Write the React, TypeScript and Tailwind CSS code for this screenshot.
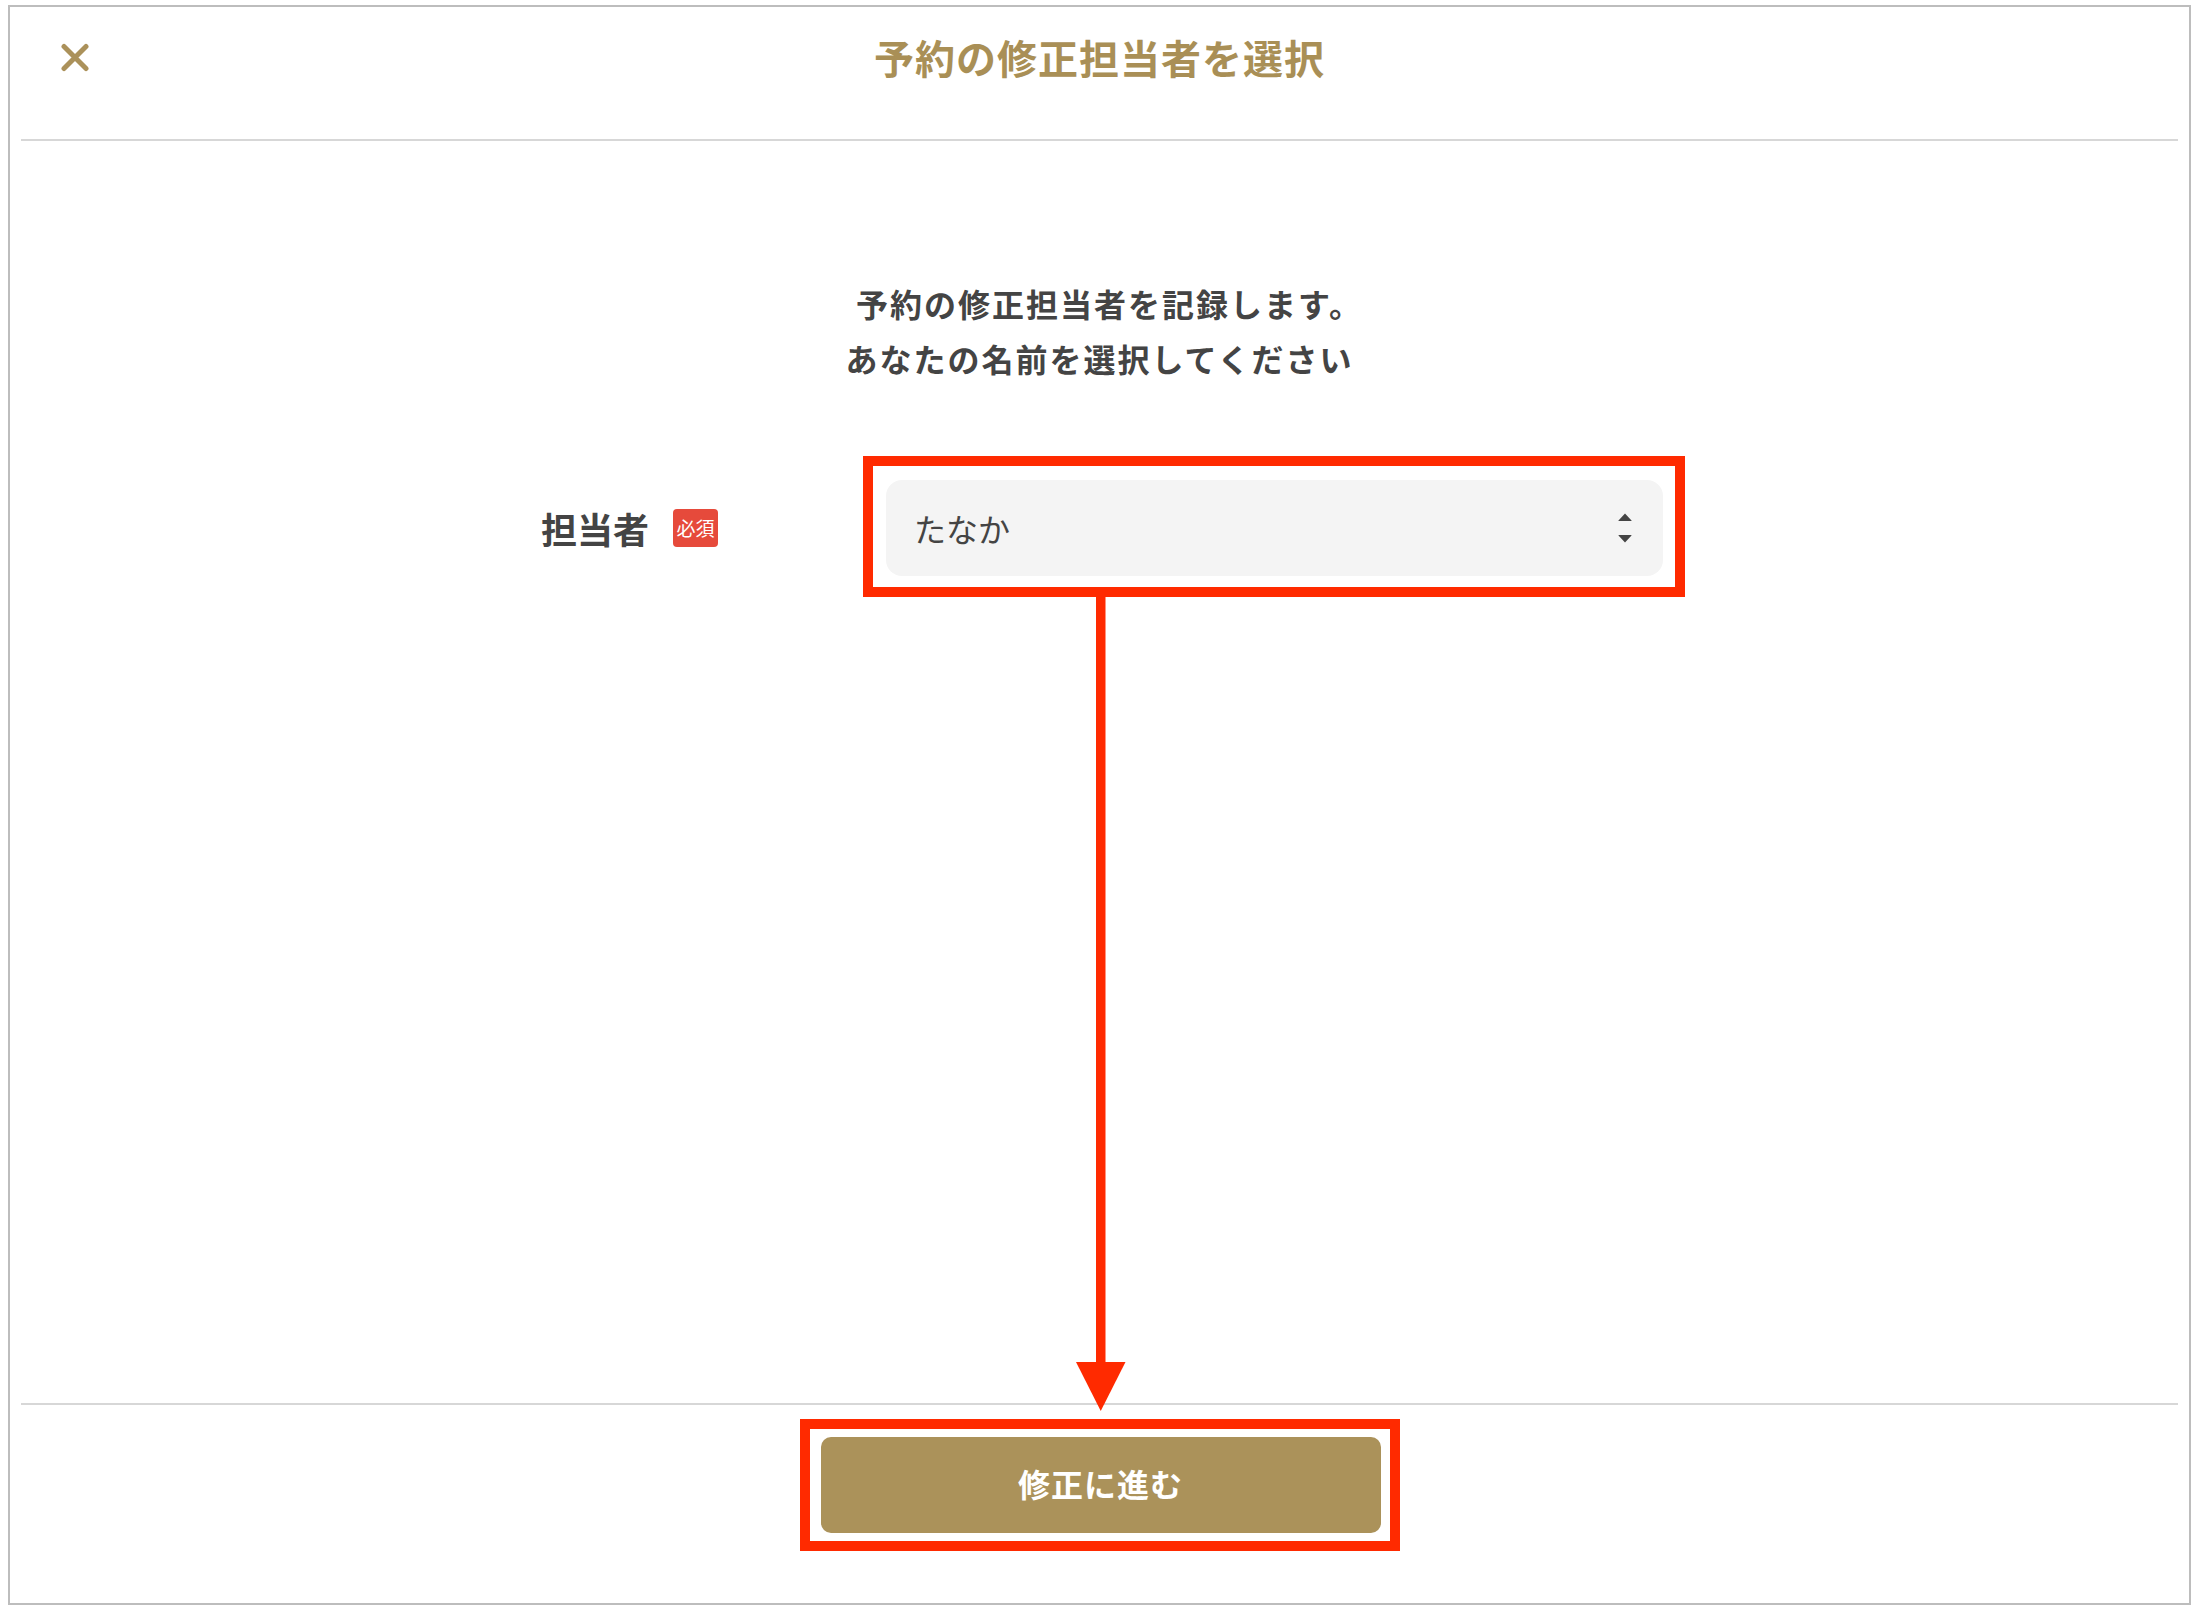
import React from 'react';

const gold = '#ab915a';

const CloseIcon: React.FC = () => (
  <svg width="28" height="29" viewBox="0 0 28 29" fill="none">
    <path d="M3 3.5 L25 25.5 M25 3.5 L3 25.5" stroke={gold} strokeWidth="5" strokeLinecap="round" />
  </svg>
);

const SelectArrows: React.FC = () => (
  <svg width="14" height="30" viewBox="0 0 14 30" fill="#444">
    <path d="M7 0.5 L13.5 7.5 Q14 8 13 8 L1 8 Q0 8 0.5 7.5 Z" />
    <path d="M7 29.5 L13.5 22.5 Q14 22 13 22 L1 22 Q0 22 0.5 22.5 Z" />
  </svg>
);

// red annotation arrow from the select down to the button
const GuideArrow: React.FC = () => (
  <svg className="absolute left-[1076px] top-[597px]" width="50" height="815" viewBox="0 0 50 815">
    <rect x="20" y="0" width="9.5" height="770" fill="#ff2a00" />
    <polygon points="0,765 49.5,765 24.75,814" fill="#ff2a00" />
  </svg>
);

const App: React.FC = () => {
  const staff = ['たなか', 'さとう', 'すずき'];

  return (
    <div className="relative w-[2198px] h-[1612px] bg-white pt-[5px] pl-[8px] font-['Noto_Sans_CJK_JP','Noto_Sans',sans-serif] text-[#444]">
      <div className="w-[2183px] h-[1600px] border-2 border-[#bdbdbd] flex flex-col px-[11px]">
        {/* Header */}
        <div className="h-[134px] shrink-0 pt-[22px] border-b-2 border-[#d7d7d7]">
          <div className="grid grid-cols-[1fr_auto_1fr] items-center h-[56px]">
            <button className="justify-self-start ml-[40px] flex items-center">
              <CloseIcon />
            </button>
            <h1 className="text-[40px] leading-[56px] font-bold tracking-[1px] text-[#a98f56]">
              予約の修正担当者を選択
            </h1>
            <div />
          </div>
        </div>

        {/* Body */}
        <div className="flex-1 flex flex-col items-center pt-[135px]">
          <p className="text-[32px] leading-[55px] font-bold tracking-[2px] text-center text-[#444]">
            <span className="block pl-[20px]">予約の修正担当者を記録します。</span>
            <span className="block">あなたの名前を選択してください</span>
          </p>

          <div className="mt-[94px] w-[1122px] ml-[5px] flex items-center">
            <span className="text-[36px] leading-[48px] font-bold text-[#444]">担当者</span>
            <span className="ml-[24px] w-[45px] h-[38px] rounded-[4px] bg-[#e64a3b] text-white text-[19px] leading-[38px] text-center">
              必須
            </span>
            <div className="relative ml-auto w-[777px] h-[96px]">
              <div className="w-full h-full rounded-[16px] bg-[#f4f4f4] flex items-center justify-between pl-[28px] pr-[31px]">
                <span className="text-[32px] leading-[40px] text-[#444]">{staff[0]}</span>
                <SelectArrows />
              </div>
              <div className="absolute -left-[23px] -right-[22px] -top-[24px] -bottom-[21px] border-[10px] border-[#ff2a00] pointer-events-none" />
            </div>
          </div>
        </div>

        {/* Footer */}
        <div className="h-[200px] shrink-0 border-t-2 border-[#d7d7d7] pt-[32px] flex justify-center">
          <div className="relative w-[560px] h-[96px] ml-[2px]">
            <button className="w-full h-full pb-[5px] rounded-[10px] bg-[#ab925a] text-white text-[32px] font-bold tracking-[1px]">
              修正に進む
            </button>
            <div className="absolute -left-[21px] -right-[19px] -top-[18px] -bottom-[18px] border-[10px] border-[#ff2a00] pointer-events-none" />
          </div>
        </div>
      </div>
      <GuideArrow />
    </div>
  );
};

export default App;
